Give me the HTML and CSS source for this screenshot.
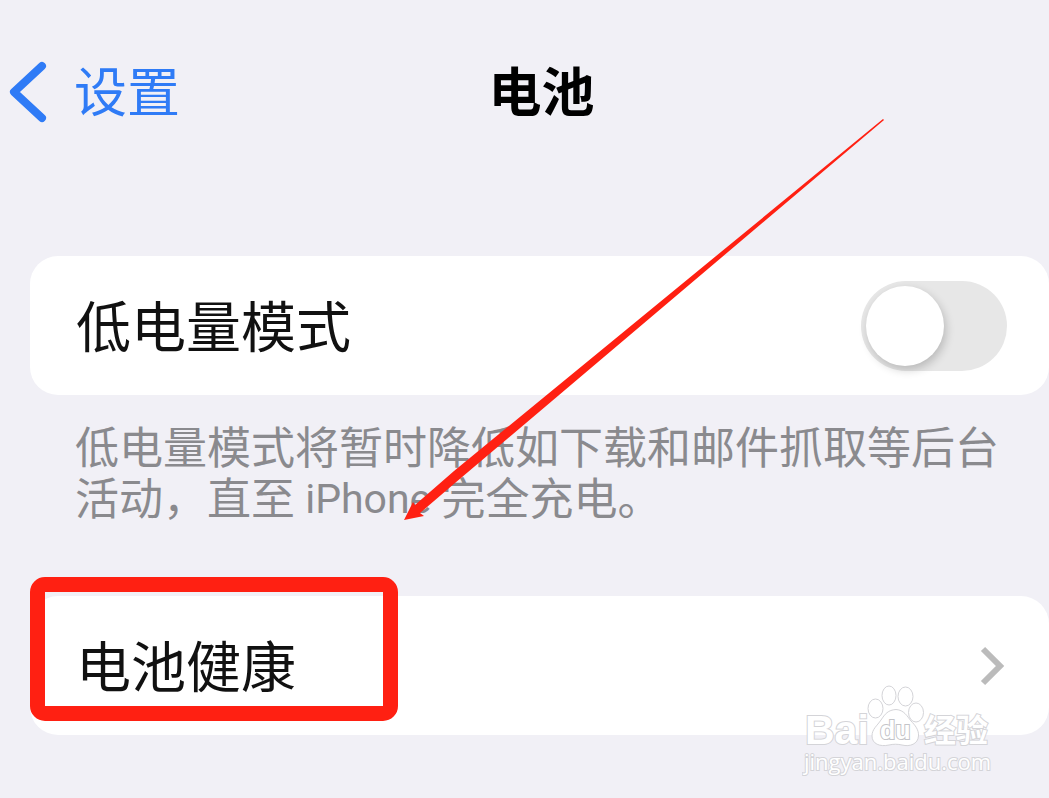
FILE: index.html
```
<!DOCTYPE html>
<html lang="zh-CN">
<head>
  <meta charset="UTF-8">
  <title>电池</title>
  <meta name="viewport" content="width=device-width, initial-scale=1.0">
  <link rel="stylesheet" href="styles.css">
</head>
<body>

<header class="navbar">
  <a class="back" href="#">
    <svg class="back-icon" width="40" height="64" viewBox="0 0 40 64">
      <path d="M34 6 L6 32 L34 58" />
    </svg>
    <span class="text">设置</span>
  </a>
  <h1 class="title text">电池</h1>
</header>

<main class="settings">
  <div class="card">
    <label class="text" for="lowPower">低电量模式</label>
    <input class="switch" type="checkbox" id="lowPower" role="switch">
  </div>
  <p class="note">低电量模式将暂时降低如下载和邮件抓取等后台活动，直至<span class="device"> iPhone </span>完全充电。</p>

  <a class="card" href="#">
    <span class="text">电池健康</span>
    <svg class="chevron" width="28" height="40" viewBox="0 0 28 40">
      <path d="M4 3 L21 20 L4 37" />
    </svg>
    <span class="highlight"></span>
  </a>
</main>

<svg class="arrow" width="480" height="401" viewBox="0 0 480 401">
  <polygon points="0,401 9,383 11,386 50,352 479,0 480,1 51,364 16,394 20,397" />
</svg>

<svg class="watermark" width="194" height="100" viewBox="0 0 194 100">
  <g class="logo">
    <text class="latin" x="3" y="62">Bai</text>
    <ellipse cx="73.5" cy="26.5" rx="7.5" ry="9.5" />
    <ellipse cx="87" cy="13.5" rx="7" ry="9.5" />
    <ellipse cx="103.5" cy="14.5" rx="7.5" ry="9.5" />
    <ellipse cx="114" cy="30.5" rx="7.5" ry="9.5" />
    <path d="M94 27.5 C102 28 105 34 109 39 C113 43 117 48 116.500 54 C116 62 108 65 100 63 C96 62 91 62 87 63 C78 65 70 62 70 54 C70 47 75 44 79 38 C83 32 86 28 94 27.500 Z" />
    <text class="du" x="78" y="57">du</text>
    <text class="cjk" x="122" y="60">经验</text>
  </g>
  <text class="url" x="2" y="88">jingyan.baidu.com</text>
</svg>

</body>
</html>
```

FILE: styles.css
```
* {
  box-sizing: border-box;
}
body {
  position: relative;
  margin: 0;
  min-height: 100vh;
  overflow-x: hidden;
  background: #f1f0f6;
  color: #111;
  font-family: "Noto Sans CJK SC", sans-serif;
}
a {
  color: inherit;
  text-decoration: none;
}
.text {
  padding-bottom: 6px;
}
.navbar {
  display: grid;
  grid-template-columns: 1fr auto 1fr;
  align-items: center;
  height: 184px;
  padding-left: 34px;
}
.back {
  display: flex;
  align-items: center;
  gap: 26px;
  margin-left: -26px;
  color: #2f7bf6;
  font-size: 53px;
  line-height: 64px;
}
.back-icon {
  fill: none;
  stroke: #2f7bf6;
  stroke-width: 8;
  stroke-linecap: round;
  stroke-linejoin: round;
}
.title {
  margin: 0;
  color: #000;
  font-size: 53px;
  font-weight: 700;
  line-height: 64px;
}
.settings {
  padding: 72px 0 0 30px;
}
.card {
  position: relative;
  display: flex;
  align-items: center;
  justify-content: space-between;
  height: 139px;
  padding: 0 42px 0 46px;
  border-radius: 28px;
  background: #fff;
  font-size: 55px;
  line-height: 64px;
}
.switch {
  appearance: none;
  width: 146px;
  height: 90px;
  margin: 0;
  padding: 5px;
  border-radius: 45px;
  background: #e7e7e7;
}
.switch::before {
  content: "";
  display: block;
  width: 78px;
  height: 80px;
  border-radius: 50%;
  background: #fff;
  box-shadow: 2px 4px 10px rgba(0, 0, 0, 0.2);
}
.switch:checked {
  background: #34c759;
}
.switch:checked::before {
  margin-left: auto;
}
.note {
  margin: 0;
  padding: 25px 46px 74px 45px;
  color: #8a8a8e;
  font-size: 44px;
  line-height: 51px;
}
.device {
  font-family: Roboto, sans-serif;
  font-size: 41px;
  line-height: 1;
  vertical-align: 2px;
}
.chevron {
  fill: none;
  stroke: #bbb;
  stroke-width: 6;
}
.highlight {
  position: absolute;
  top: -19px;
  left: 0;
  width: 368px;
  height: 144px;
  border: 15px solid #ff2012;
  border-radius: 15px;
}
.arrow {
  position: absolute;
  top: 119px;
  left: 404px;
  fill: #ff2012;
  pointer-events: none;
}
.watermark {
  position: absolute;
  top: 682px;
  left: 802px;
  fill: #fff;
  stroke: #d4d4d8;
  stroke-width: 1;
  pointer-events: none;
}
.watermark text {
  paint-order: stroke;
  stroke-width: 2;
}
.watermark .latin {
  font-family: "Liberation Sans", sans-serif;
  font-size: 41px;
  font-weight: 700;
}
.watermark .du {
  font-family: "Liberation Sans", sans-serif;
  font-size: 25px;
  font-weight: 700;
  stroke: #c4c4c8;
}
.watermark .cjk {
  font-family: "Noto Sans CJK SC", sans-serif;
  font-size: 32px;
  font-weight: 700;
}
.watermark .url {
  font-family: "Open Sans", sans-serif;
  font-size: 22px;
}
```
